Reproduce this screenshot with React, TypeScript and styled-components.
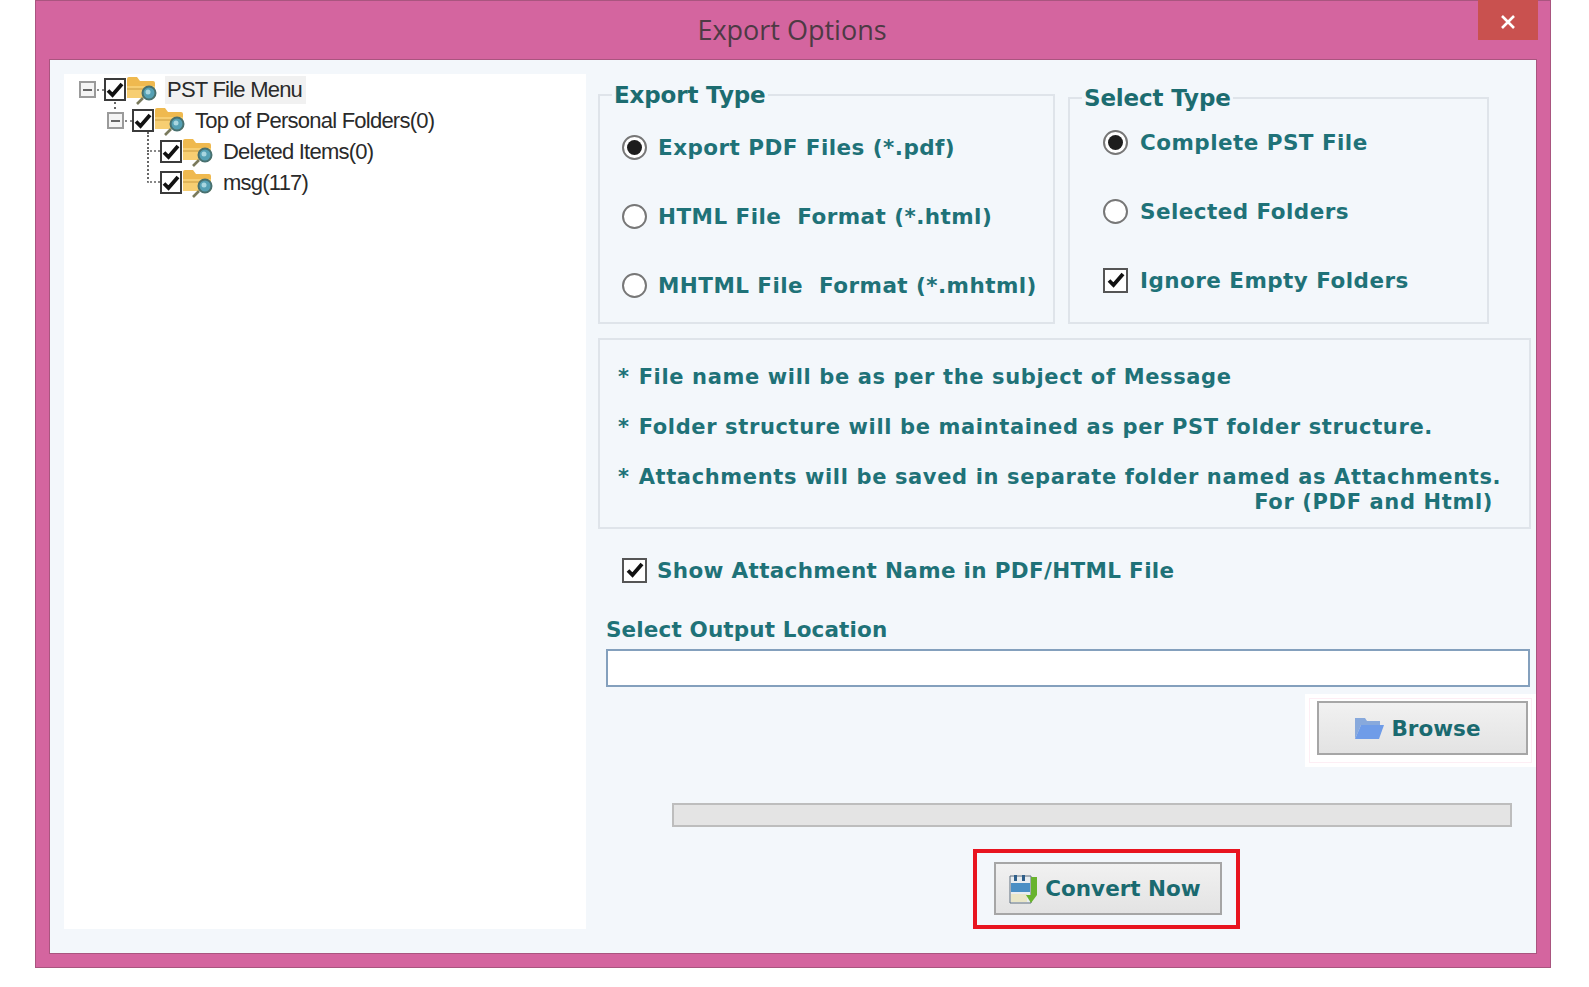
import React from 'react';
import styled, { createGlobalStyle } from 'styled-components';

const GlobalStyle = createGlobalStyle`
  html, body {
    margin: 0;
    padding: 0;
    background: #fff;
  }
`;

const teal = '#1f7278';

const Page = styled.div`
  width: 1589px;
  height: 987px;
  padding-left: 35px;
  box-sizing: border-box;
  overflow: hidden;
`;

const Window = styled.div`
  position: relative;
  width: 1516px;
  height: 968px;
  box-sizing: border-box;
  display: flex;
  flex-direction: column;
  background: #d4659f;
  box-shadow: inset 0 0 0 1px #a9557f;
`;

const TitleBar = styled.div`
  height: 60px;
  flex: none;
  display: flex;
  align-items: center;
  justify-content: center;
  padding: 0 2px 2px 0;
  box-sizing: border-box;
  font-family: 'Open Sans', sans-serif;
  font-size: 27px;
  color: #4d3a44;
`;

const CloseButton = styled.button`
  position: absolute;
  top: 0;
  right: 13px;
  width: 60px;
  height: 40px;
  padding: 4px 1px 0 0;
  border: none;
  background: #c9514f;
  display: flex;
  align-items: center;
  justify-content: center;
`;

const Panel = styled.div`
  flex: 1;
  margin: 0 15px 15px;
  padding: 14px 0 24px 14px;
  display: flex;
  gap: 12px;
  background: #f3f7fb;
  box-shadow: 0 0 0 1px #a9557f;
  min-height: 0;
`;

const TreePane = styled.div`
  width: 522px;
  flex: none;
  background: #fff;
`;

const TreeRow = styled.div<{ $depth: number }>`
  height: 31px;
  display: flex;
  align-items: center;
  padding-left: ${(p) => 15 + p.$depth * 28}px;
  font-family: 'Liberation Sans', sans-serif;
  font-size: 22px;
  letter-spacing: -0.77px;
  color: #2a2a2a;
`;

const Slot = styled.span`
  position: relative;
  width: 17px;
  height: 31px;
  flex: none;
  display: flex;
  align-items: center;
  margin-right: 8px;
`;

const Expander = styled.span`
  position: relative;
  width: 17px;
  height: 17px;
  box-sizing: border-box;
  border: 2px solid #9a9a9a;
  background: #f4f4f4;
  display: flex;
  align-items: center;
  justify-content: center;

  &::before {
    content: '';
    width: 9px;
    height: 2px;
    background: #666;
  }

  &::after {
    content: '';
    position: absolute;
    left: 16px;
    top: 6px;
    width: 7px;
    border-top: 2px dotted #888;
  }
`;

const Stub = styled.span`
  position: absolute;
  left: 7px;
  top: -3px;
  height: 7px;
  border-left: 2px dotted #666;
`;

const Elbow = styled.span<{ $tall: number }>`
  position: absolute;
  left: 12px;
  bottom: 15px;
  width: 11px;
  height: ${(p) => p.$tall}px;
  border-left: 2px dotted #666;
  border-bottom: 2px dotted #888;
`;

const TreeLabel = styled.span<{ $selected?: boolean }>`
  margin-left: 7px;
  padding: 1px 4px 1px 2px;
  background: ${(p) => (p.$selected ? '#f1f1f1' : 'transparent')};
`;

const TreeCheck = styled.span`
  width: 22px;
  height: 23px;
  box-sizing: border-box;
  border: 2px solid #3b3b3b;
  background: #fff;
  flex: none;
  display: flex;
  align-items: center;
  justify-content: center;
`;

const FormPane = styled.div`
  flex: 1;
  min-width: 0;
  padding-top: 9px;
  display: flex;
  flex-direction: column;
  align-items: flex-start;
`;

const TypeRow = styled.div`
  height: 241px;
  flex: none;
  display: flex;
  gap: 13px;
`;

const TypeGroup = styled.fieldset<{ $width: number; $offset: number; $pad: number }>`
  width: ${(p) => p.$width}px;
  margin: ${(p) => p.$offset}px 0 0;
  padding: ${(p) => p.$pad}px 0 0;
  box-sizing: border-box;
  border: 2px solid #dfe4ea;
  min-width: 0;
`;

const GroupTitle = styled.legend`
  margin-left: 12px;
  padding: 0 2px;
  line-height: 24px;
  font-family: 'DejaVu Sans', sans-serif;
  font-weight: 700;
  font-size: 23px;
  letter-spacing: -0.15px;
  color: #1c6c70;
`;

const OptionList = styled.div<{ $left: number }>`
  padding-left: ${(p) => p.$left}px;
  display: flex;
  flex-direction: column;
  gap: 39px;
`;

const OptionRow = styled.div<{ $gap: number }>`
  height: 30px;
  display: flex;
  align-items: center;
  gap: ${(p) => p.$gap}px;
  font-family: 'DejaVu Sans', sans-serif;
  font-weight: 700;
  font-size: 21.5px;
  letter-spacing: 0.45px;
  color: ${teal};
  white-space: pre;
`;

const Radio = styled.span<{ $on?: boolean }>`
  width: 25px;
  height: 25px;
  flex: none;
  box-sizing: border-box;
  border: 2px solid #777;
  border-radius: 50%;
  background: #fff;
  display: flex;
  align-items: center;
  justify-content: center;

  &::before {
    content: '';
    display: ${(p) => (p.$on ? 'block' : 'none')};
    width: 15px;
    height: 15px;
    border-radius: 50%;
    background: #1d1d1d;
  }
`;

const CheckBox = styled.span`
  width: 25px;
  height: 25px;
  flex: none;
  box-sizing: border-box;
  border: 2px solid #555;
  background: #fff;
  display: flex;
  align-items: center;
  justify-content: center;
`;

const InfoBox = styled.div`
  width: 933px;
  height: 191px;
  flex: none;
  margin-top: 14px;
  padding: 25px 0 0 18px;
  box-sizing: border-box;
  border: 2px solid #dfe4ea;
  display: flex;
  flex-direction: column;
  gap: 25px;
  font-family: 'DejaVu Sans', sans-serif;
  font-weight: 700;
  font-size: 21px;
  letter-spacing: 0.63px;
  line-height: 25px;
  color: ${teal};
`;

const InfoLine = styled.div`
  display: flex;
  gap: 9px;
  white-space: pre;
`;

const InfoBlock = styled.div`
  display: flex;
  flex-direction: column;
`;

const InfoTail = styled.div`
  align-self: flex-end;
  margin-right: 36px;
  line-height: 25px;
`;

const AttachRow = styled(OptionRow)`
  margin: 26px 0 0 24px;
  flex: none;
  letter-spacing: 0.33px;
`;

const OutputLabel = styled.div`
  margin: 33px 0 0 8px;
  height: 24px;
  line-height: 24px;
  font-family: 'DejaVu Sans', sans-serif;
  font-weight: 700;
  font-size: 21.5px;
  letter-spacing: 0.14px;
  color: ${teal};
`;

const OutputInput = styled.input`
  width: 924px;
  height: 38px;
  flex: none;
  margin: 7px 0 0 8px;
  padding: 0 6px;
  box-sizing: border-box;
  border: 2px solid #84a0bd;
  background: #fff;
  outline: none;
`;

const BrowseFrame = styled.div`
  align-self: flex-end;
  width: 231px;
  height: 73px;
  flex: none;
  margin-top: 7px;
  padding: 7px 0 0 12px;
  box-sizing: border-box;
  background: #fff;
  outline: 1px solid #fdeef4;
  outline-offset: -5px;
`;

const ActionButton = styled.button<{ $width: number; $height: number; $shift: number }>`
  width: ${(p) => p.$width}px;
  height: ${(p) => p.$height}px;
  padding: 0 ${(p) => p.$shift}px 0 0;
  box-sizing: border-box;
  border: 2px solid #a6a6a6;
  background: linear-gradient(#f1f1f1, #e3e3e3);
  display: flex;
  align-items: center;
  justify-content: center;
  gap: 6px;
  font-family: 'DejaVu Sans', sans-serif;
  font-weight: 700;
  font-size: 21.5px;
  color: #1a6a70;
`;

const ProgressTrack = styled.div`
  width: 840px;
  height: 24px;
  flex: none;
  margin: 36px 0 0 74px;
  box-sizing: border-box;
  border: 2px solid #bdbdbd;
  background: #e4e4e4;
`;

const Highlight = styled.div`
  width: 267px;
  height: 80px;
  flex: none;
  margin: 22px 0 0 375px;
  padding: 9px 0 0 17px;
  box-sizing: border-box;
  border: 4px solid #e8141f;
`;

const Tick = () => (
  <svg width="18" height="16" viewBox="0 0 18 16">
    <path d="M2 8.5 L6.5 13 L16 2" fill="none" stroke="#111" strokeWidth="3.8" />
  </svg>
);

const SearchFolder = () => (
  <svg width="32" height="30" viewBox="0 0 32 30" style={{ flex: 'none' }}>
    <path d="M1 4 Q1 2 3 2 H11 L14 6 H27 Q29 6 29 8 V23 H1 Z" fill="#efb94f" />
    <rect x="1" y="11" width="28" height="12" fill="#f7ce72" />
    <path d="M1 14 H23" stroke="#c99a3e" strokeWidth="1" />
    <path d="M17 23 L11 29" stroke="#7a7a5c" strokeWidth="2.6" />
    <circle cx="23" cy="18" r="6.5" fill="#55a0b4" stroke="#48706f" strokeWidth="2" />
    <circle cx="22" cy="17" r="2.5" fill="#a9d6e0" />
  </svg>
);

const BrowseIcon = () => (
  <svg width="32" height="26" viewBox="0 0 32 26">
    <path d="M2 24 V3 H12 L14 6 H27 V10 H8 Z" fill="#88a9dc" />
    <path d="M2 24 L8 10 H31 L26 24 Z" fill="#6f9ce8" />
  </svg>
);

const SaveIcon = () => (
  <svg width="30" height="32" viewBox="0 0 30 32">
    <path d="M1 3 H22 V30 H1 Z" fill="#e8edf0" stroke="#5f6f7e" />
    <rect x="2" y="10" width="19" height="9" fill="#4a8fc4" />
    <rect x="5" y="2" width="3" height="6" fill="#2f5f8a" />
    <rect x="13" y="2" width="3" height="6" fill="#2f5f8a" />
    <rect x="2" y="21" width="16" height="8" fill="#e9e6c8" />
    <path d="M22 4 H28 V22 L22 30 L17 22 H22 Z" fill="#69b32e" />
  </svg>
);

const exportOptions = ['Export PDF Files (*.pdf)', 'HTML File  Format (*.html)', 'MHTML File  Format (*.mhtml)'];

const App: React.FC = () => {
  return (
    <Page>
      <GlobalStyle />
      <Window>
        <TitleBar>Export Options</TitleBar>
        <CloseButton aria-label="Close">
          <svg width="16" height="16" viewBox="0 0 16 16">
            <path d="M2 2 L14 14 M14 2 L2 14" stroke="#fff" strokeWidth="2.6" />
          </svg>
        </CloseButton>
        <Panel>
          <TreePane>
            <TreeRow $depth={0}>
              <Slot><Expander /></Slot>
              <TreeCheck><Tick /></TreeCheck>
              <SearchFolder />
              <TreeLabel $selected>PST File Menu</TreeLabel>
            </TreeRow>
            <TreeRow $depth={1}>
              <Slot><Stub /><Expander /></Slot>
              <TreeCheck><Tick /></TreeCheck>
              <SearchFolder />
              <TreeLabel>Top of Personal Folders(0)</TreeLabel>
            </TreeRow>
            <TreeRow $depth={2}>
              <Slot><Elbow $tall={18} /></Slot>
              <TreeCheck><Tick /></TreeCheck>
              <SearchFolder />
              <TreeLabel>Deleted Items(0)</TreeLabel>
            </TreeRow>
            <TreeRow $depth={2}>
              <Slot><Elbow $tall={31} /></Slot>
              <TreeCheck><Tick /></TreeCheck>
              <SearchFolder />
              <TreeLabel>msg(117)</TreeLabel>
            </TreeRow>
          </TreePane>
          <FormPane>
            <TypeRow>
              <TypeGroup $width={457} $offset={0} $pad={25}>
                <GroupTitle>Export Type</GroupTitle>
                <OptionList $left={22}>
                  {exportOptions.map((label, i) => (
                    <OptionRow key={label} $gap={11}>
                      <Radio $on={i === 0} />
                      {label}
                    </OptionRow>
                  ))}
                </OptionList>
              </TypeGroup>
              <TypeGroup $width={421} $offset={3} $pad={17}>
                <GroupTitle>Select Type</GroupTitle>
                <OptionList $left={33}>
                  <OptionRow $gap={12}>
                    <Radio $on />
                    Complete PST File
                  </OptionRow>
                  <OptionRow $gap={12}>
                    <Radio />
                    Selected Folders
                  </OptionRow>
                  <OptionRow $gap={12}>
                    <CheckBox><Tick /></CheckBox>
                    Ignore Empty Folders
                  </OptionRow>
                </OptionList>
              </TypeGroup>
            </TypeRow>
            <InfoBox>
              <InfoLine><span>*</span><span>File name will be as per the subject of Message</span></InfoLine>
              <InfoLine><span>*</span><span>Folder structure will be maintained as per PST folder structure.</span></InfoLine>
              <InfoBlock>
                <InfoLine><span>*</span><span>Attachments will be saved in separate folder named as Attachments.</span></InfoLine>
                <InfoTail>For (PDF and Html)</InfoTail>
              </InfoBlock>
            </InfoBox>
            <AttachRow $gap={10}>
              <CheckBox><Tick /></CheckBox>
              Show Attachment Name in PDF/HTML File
            </AttachRow>
            <OutputLabel>Select Output Location</OutputLabel>
            <OutputInput type="text" />
            <BrowseFrame>
              <ActionButton $width={211} $height={54} $shift={11}>
                <BrowseIcon />
                Browse
              </ActionButton>
            </BrowseFrame>
            <ProgressTrack />
            <Highlight>
              <ActionButton $width={228} $height={53} $shift={6}>
                <SaveIcon />
                Convert Now
              </ActionButton>
            </Highlight>
          </FormPane>
        </Panel>
      </Window>
    </Page>
  );
};

export default App;
